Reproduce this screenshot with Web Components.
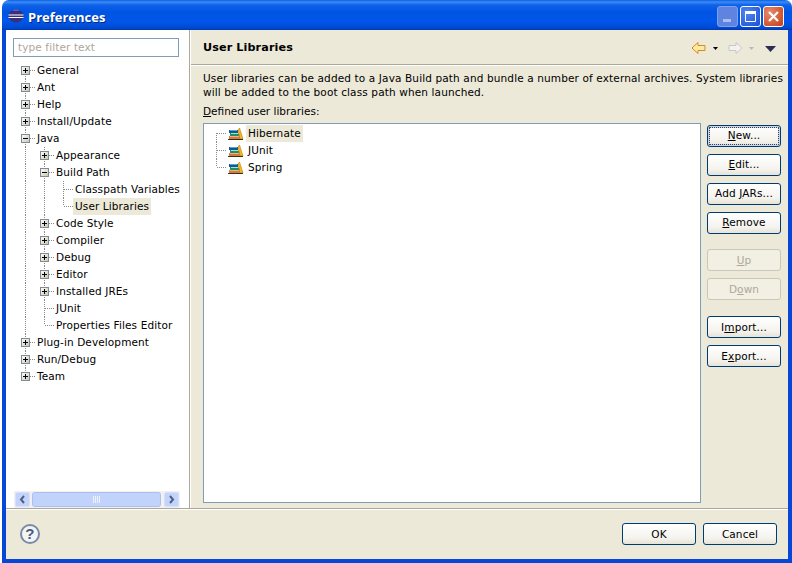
<!DOCTYPE html>
<html>
<head>
<meta charset="utf-8">
<title>Preferences</title>
<style>
  html, body { margin: 0; padding: 0; background: #fff; overflow: hidden; }
  body { font: 10.5px "DejaVu Sans", sans-serif; color: #000; letter-spacing: .11px; }
  u { text-underline-offset: 1px; }
</style>
</head>
<body>
<pref-window>
  <span slot="title">Preferences</span>
  <pref-tree slot="nav">
    <tree-row kind="plus" pos="first">General</tree-row>
    <tree-row kind="plus">Ant</tree-row>
    <tree-row kind="plus">Help</tree-row>
    <tree-row kind="plus">Install/Update</tree-row>
    <tree-row kind="minus">Java</tree-row>
    <tree-row trail="|" kind="plus">Appearance</tree-row>
    <tree-row trail="|" kind="minus">Build Path</tree-row>
    <tree-row trail="||" pos="first">Classpath Variables</tree-row>
    <tree-row trail="||" pos="last" selected>User Libraries</tree-row>
    <tree-row trail="|" kind="plus">Code Style</tree-row>
    <tree-row trail="|" kind="plus">Compiler</tree-row>
    <tree-row trail="|" kind="plus">Debug</tree-row>
    <tree-row trail="|" kind="plus">Editor</tree-row>
    <tree-row trail="|" kind="plus">Installed JREs</tree-row>
    <tree-row trail="|">JUnit</tree-row>
    <tree-row trail="|" pos="last">Properties Files Editor</tree-row>
    <tree-row kind="plus">Plug-in Development</tree-row>
    <tree-row kind="plus">Run/Debug</tree-row>
    <tree-row kind="plus" pos="last">Team</tree-row>
  </pref-tree>
  <span slot="heading">User Libraries</span>
  <span slot="intro">User libraries can be added to a Java Build path and bundle a number of external archives. System libraries<br>will be added to the boot class path when launched.</span>
  <span slot="label"><u>D</u>efined user libraries:</span>
  <tree-row slot="list" pos="first" icon selected>Hibernate</tree-row>
  <tree-row slot="list" icon>JUnit</tree-row>
  <tree-row slot="list" pos="last" icon>Spring</tree-row>
  <xp-button slot="actions" focused><u>N</u>ew...</xp-button>
  <xp-button slot="actions"><u>E</u>dit...</xp-button>
  <xp-button slot="actions">Add <u>J</u>ARs...</xp-button>
  <xp-button slot="actions"><u>R</u>emove</xp-button>
  <xp-button slot="actions" disabled style="margin-top:8px;--line:21px"><u>U</u>p</xp-button>
  <xp-button slot="actions" disabled style="--line:21px">D<u>o</u>wn</xp-button>
  <xp-button slot="actions" style="margin-top:9px;--line:21px">I<u>m</u>port...</xp-button>
  <xp-button slot="actions" style="--line:21px">E<u>x</u>port...</xp-button>
  <xp-button slot="footer" style="--line:21px">OK</xp-button>
  <xp-button slot="footer" style="--line:21px">Cancel</xp-button>
</pref-window>

<script>
class PrefWindow extends HTMLElement {
    #shadow = this.attachShadow({ mode: 'open' });

    constructor() {
        super();
        this.#shadow.innerHTML = `
            <style>
                :host { display: flex; flex-direction: column; box-sizing: border-box; width: 790px; height: 563px; margin-left: 2px;
                    background: #ece9d8; border-radius: 7px 7px 0 0; overflow: hidden; }
                .titlebar { flex: none; height: 30px; display: flex; align-items: center; gap: 2px; padding: 2px 8px 0 6px; box-sizing: border-box; color: #fff;
                    background: linear-gradient(#0a5fe6 0, #3b8cf5 2px, #0f62e8 5px, #0054e3 12px, #0056e8 22px, #0049d0 28px, #0036b0 30px);
                    font: bold 13px "Open Sans", sans-serif; letter-spacing: 0; text-shadow: 1px 1px 0 #0a2a80; }
                .titlebar .logo { margin-right: 2px; flex: none; }
                .titlebar .caption { flex: 1; padding-top: 1px; }
                .ctl { width: 21px; height: 21px; box-sizing: border-box; border: 1px solid #fff; border-radius: 3px; display: block; flex: none; }
                .ctl.min { background: #5e84e0; border-color: #7f9ff0; }
                .ctl.max { background: radial-gradient(circle at 30% 30%, #4f86f0, #1a4fd6); }
                .ctl.close { background: radial-gradient(circle at 30% 30%, #e88a6e, #c63c14); }
                .frame { flex: 1; min-height: 0; display: flex; flex-direction: column; border: solid #0747d8; border-width: 0 4px 4px 4px; }
                .main { flex: 1; min-height: 0; display: flex; border-bottom: 1px solid #aca899; box-shadow: 0 1px 0 #fff; }
                .nav { flex: none; width: 183px; background: #fff; border-right: 1px solid #aca899; display: flex; flex-direction: column; box-shadow: 1px 0 0 #fff; }
                .filter { margin: 8px 0 5px 7px; width: 166px; height: 19px; box-sizing: border-box; border: 1px solid #7f9db9; color: #aca899; padding: 1px 0 0 4px; line-height: 14px; }
                .navtree { flex: 1; min-height: 0; }
                .hbar { flex: none; margin: 0 0 0 8px; }
                .page { flex: 1; min-width: 0; margin-left: 1px; display: flex; flex-direction: column; overflow: hidden; }
                .head { flex: none; height: 35px; display: flex; align-items: center; padding: 1px 0 0 12px; box-sizing: border-box; border-bottom: 1px solid #aca899; box-shadow: 0 1px 0 #fff; font-weight: bold; font-size: 11.2px; }
                .head .name { flex: 1; }
                .head svg { display: block; margin-right: 11px; }
                .intro { margin: 6px 0 0 12px; line-height: 14px; white-space: nowrap; letter-spacing: .13px; }
                .label { margin: 5px 0 5px 12px; line-height: 14px; letter-spacing: 0; }
                .body { flex: 1; min-height: 0; display: flex; gap: 6px; margin: 0 7px 5px 12px; }
                .list { flex: 1; background: #fff; border: 1px solid #7f9db9; padding: 1px 0 0 3px; box-sizing: border-box; }
                .actions { flex: none; width: 74px; padding-top: 2px; display: flex; flex-direction: column; gap: 7px; }
                .footer { flex: none; height: 50px; display: flex; align-items: center; gap: 7px; padding: 0 11px 0 14px; box-sizing: border-box; }
                .help { width: 20px; height: 20px; box-sizing: border-box; border: 2px solid #7a8ba8; border-radius: 50%; margin-right: auto; color: #4a5c7e;
                    background: #f4f4f4; font: bold 15px/16px "Liberation Sans", sans-serif; text-align: center; }
            </style>
            <div class="titlebar">
                <svg class="logo" width="16" height="14" viewBox="0 0 16 14">
                    <ellipse cx="8" cy="7" rx="7.500" ry="6.500" fill="#38307c"/>
                    <path d="M4 1.800a7 6 0 0 1 8 0z" fill="#7a6cc0"/>
                    <path d="M0.500 5.500h15v1h-15zM0.500 8h15v1h-15z" fill="#fff"/>
                </svg>
                <span class="caption"><slot name="title"></slot></span>
                <span class="ctl min"><svg width="19" height="19"><rect x="5" y="12" width="8" height="3" fill="#a8bdf0"/></svg></span>
                <span class="ctl max"><svg width="19" height="19"><path d="M4.500 4.500h10v10h-10z" fill="none" stroke="#fff"/><rect x="4" y="4" width="11" height="3" fill="#fff"/></svg></span>
                <span class="ctl close"><svg width="19" height="19"><path d="M5 5l9 9M14 5l-9 9" stroke="#fff" stroke-width="2.200"/></svg></span>
            </div>
            <div class="frame">
                <div class="main">
                    <div class="nav">
                        <div class="filter">type filter text</div>
                        <div class="navtree"><slot name="nav"></slot></div>
                        <svg class="hbar" width="166" height="17" viewBox="0 0 166 17">
                            <rect width="166" height="17" fill="#f3f1ea"/>
                            <rect x="1" y="1" width="15" height="15" rx="2" fill="#c4d3fb" stroke="#e8eefc"/>
                            <path d="M10 5l-3 3.500 3 3.500" fill="none" stroke="#4d6185" stroke-width="2"/>
                            <rect x="18.500" y="1.500" width="128" height="14" rx="2" fill="#c1d2fb" stroke="#a9c0f5"/>
                            <path d="M79.500 5v7M81.500 5v7M83.500 5v7M85.500 5v7" stroke="#eef3ff"/>
                            <rect x="150" y="1" width="15" height="15" rx="2" fill="#c4d3fb" stroke="#e8eefc"/>
                            <path d="M156 5l3 3.500-3 3.500" fill="none" stroke="#4d6185" stroke-width="2"/>
                        </svg>
                    </div>
                    <div class="page">
                        <div class="head">
                            <span class="name"><slot name="heading"></slot></span>
                            <svg width="86" height="14" viewBox="0 0 86 14">
                                <path d="M1 7l6-5.500v3h7v5h-7v3z" fill="#fde9a8" stroke="#d68a1a"/>
                                <path d="M22 6h5l-2.500 3z" fill="#000"/>
                                <path d="M51 7l-6-5.500v3h-7v5h7v3z" fill="#f2f2ee" stroke="#c8c8c4"/>
                                <path d="M58 6h5l-2.500 3z" fill="#b8b8b0"/>
                                <path d="M74 5h11l-5.500 6z" fill="#2c2c50"/>
                            </svg>
                        </div>
                        <div class="intro"><slot name="intro"></slot></div>
                        <div class="label"><slot name="label"></slot></div>
                        <div class="body">
                            <div class="list"><slot name="list"></slot></div>
                            <div class="actions"><slot name="actions"></slot></div>
                        </div>
                    </div>
                </div>
                <div class="footer">
                    <span class="help">?</span>
                    <slot name="footer"></slot>
                </div>
            </div>
        `;
    }
}

customElements.define('pref-window', PrefWindow);


class PrefTree extends HTMLElement {
    #shadow = this.attachShadow({ mode: 'open' });

    constructor() {
        super();
        this.#shadow.innerHTML = `
            <style>:host { display: block; padding-left: 10px; }</style>
            <slot></slot>
        `;
    }
}

customElements.define('pref-tree', PrefTree);


class TreeRow extends HTMLElement {
    #shadow = this.attachShadow({ mode: 'open' });

    connectedCallback() {
        const trail = this.getAttribute('trail') || '';
        const kind = this.getAttribute('kind');
        const pos = this.getAttribute('pos');
        const guide = 'stroke="#8a8a8a" stroke-dasharray="1 1"';

        const cells = [...trail].map(c => `<svg width="19" height="17">${c === '|' ? `<path d="M9.500 0v17" ${guide}/>` : ''}</svg>`);

        const top = pos === 'first' && !trail ? 8 : 0;
        const bottom = pos === 'last' ? 8 : 17;
        let twisty = '';
        if (kind) {
            twisty = `<rect x="5.500" y="4.500" width="8" height="8" fill="url(#box)" stroke="#7f8a93"/>
                <path d="M7 8.500h5${kind === 'plus' ? 'M9.500 6v5' : ''}" stroke="#000"/>`;
        }
        cells.push(`<svg width="19" height="17">
            <defs><linearGradient id="box" x1="0" y1="0" x2="1" y2="1"><stop offset="0" stop-color="#fff"/><stop offset="1" stop-color="#c8c4b0"/></linearGradient></defs>
            <path d="M9.500 ${top}V${bottom}M10 8.500H19" ${guide}/>${twisty}</svg>`);

        const icon = this.hasAttribute('icon') ? `
            <svg class="icon" width="16" height="17" viewBox="0 0 16 17">
                <rect x="1" y="5" width="9" height="3" fill="#0e5a96"/>
                <path d="M2 5.500h7" stroke="#5aa0d8"/>
                <rect x="2" y="8" width="10" height="3" fill="#1e8f6e"/>
                <path d="M3 8.500h8" stroke="#a8e0c0"/>
                <rect x="1" y="11" width="11" height="3" fill="#d87a3c"/>
                <path d="M2 11.500h9" stroke="#f4b080"/>
                <path d="M11.500 3l3.500 11h-3l-2-9z" fill="#f4b820" stroke="#c07810" stroke-width=".6"/>
                <path d="M0 14.500h15" stroke="#3a3020"/>
            </svg>` : '';

        this.#shadow.innerHTML = `
            <style>
                :host { display: flex; height: 17px; }
                svg { display: block; flex: none; }
                .icon { margin-left: 2px; }
                .text { padding: 0 2px; height: 17px; line-height: 17px; white-space: nowrap; }
                :host([icon]) .text { margin-left: 2px; }
                :host([selected]) .text { background: #ece9d8; }
            </style>
            ${cells.join('')}${icon}<span class="text"><slot></slot></span>
        `;
    }
}

customElements.define('tree-row', TreeRow);


class XpButton extends HTMLElement {
    #shadow = this.attachShadow({ mode: 'open' });

    constructor() {
        super();
        this.#shadow.innerHTML = `
            <style>
                :host { display: block; flex: none; width: 74px; height: 22px; }
                .btn { box-sizing: border-box; width: 100%; height: 100%; border: 1px solid #003c74; border-radius: 3px; text-align: center; line-height: var(--line, 19px); white-space: nowrap;
                    background: linear-gradient(#fff, #f4f3ee 70%, #e6e3d6); }
                :host([focused]) .btn { box-shadow: inset 0 0 0 2px #c6d5f0; outline: 1px dotted #444; outline-offset: -3px; }
                :host([disabled]) .btn { border-color: #c9c7ba; background: #f2efe3; color: #aca899; }
            </style>
            <div class="btn"><slot></slot></div>
        `;
    }
}

customElements.define('xp-button', XpButton);
</script>
</body>
</html>
